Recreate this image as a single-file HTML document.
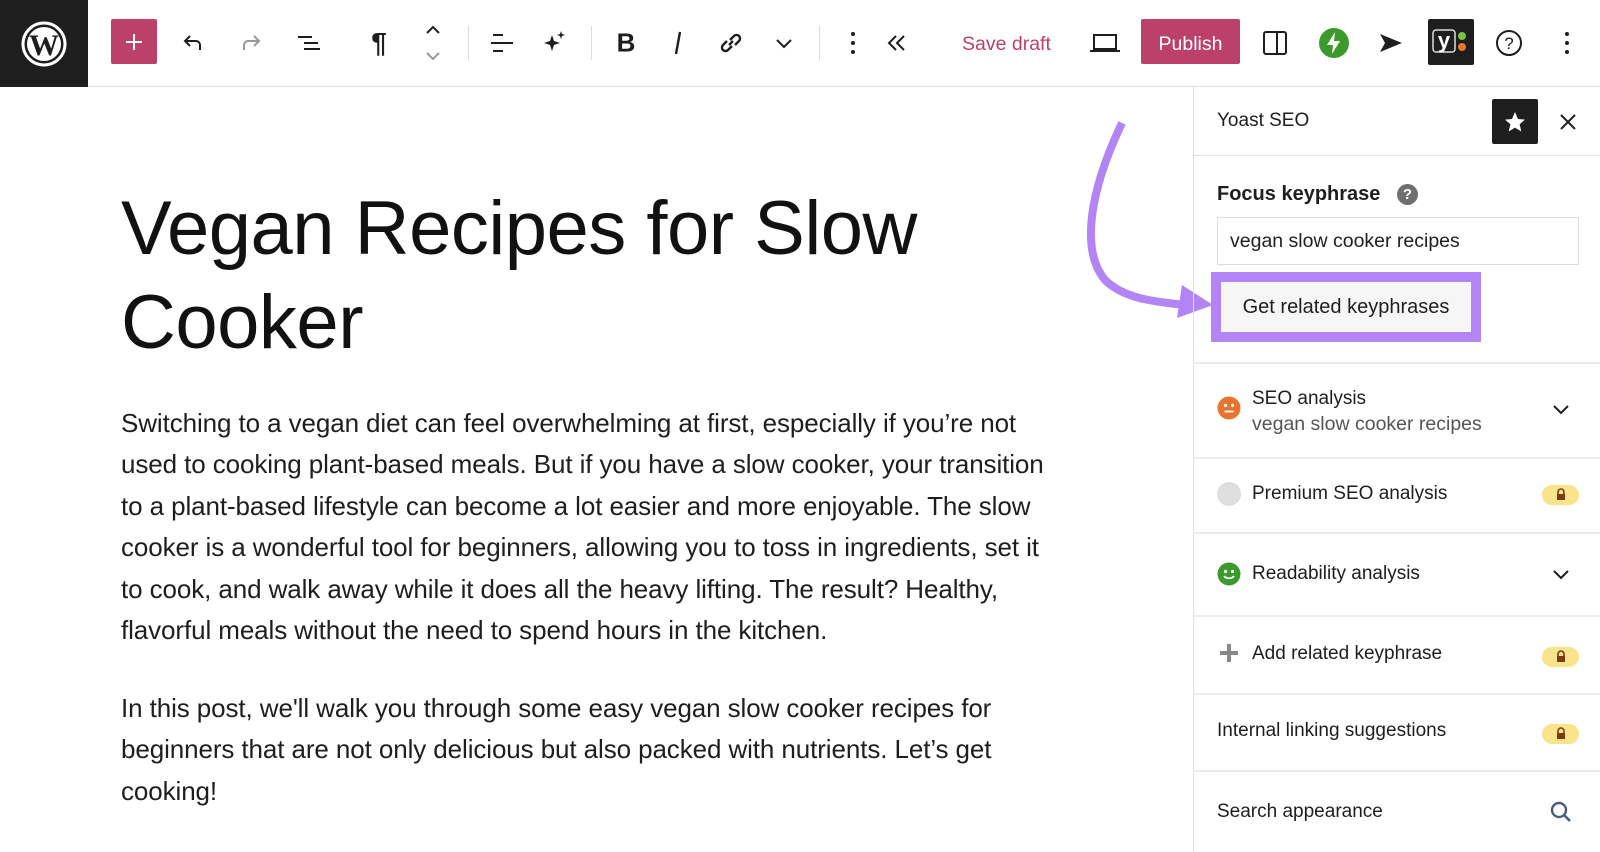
<!DOCTYPE html>
<html><head><meta charset="utf-8"><style>
*{margin:0;padding:0;box-sizing:border-box}
body{width:1600px;height:852px;overflow:hidden;background:#fff;font-family:"Liberation Sans",sans-serif;color:#1e1e1e;position:relative}
.a{position:absolute}
.tb{position:absolute;left:0;top:0;width:1600px;height:87px;border-bottom:1px solid #e0e0e0;background:#fff}
.ic{position:absolute;top:43px;transform:translate(-50%,-50%)}
.sep{position:absolute;top:26px;width:1px;height:34px;background:#ddd}
.title{left:121px;top:182px;font-size:76px;line-height:94px;color:#111;white-space:nowrap;letter-spacing:-0.5px}
.p{left:121px;font-size:26px;line-height:41.4px;color:#1e1e1e;white-space:nowrap;letter-spacing:-0.1px}
.side{left:1193px;top:87px;width:407px;height:765px;border-left:1px solid #e0e0e0}
.hr{position:absolute;left:1193px;width:407px;height:2px;background:#ececec}
.st{font-size:19px;color:#1e1e1e;white-space:nowrap}
.lock{position:absolute;left:1542px;width:37px;height:20px;border-radius:10px;background:#f9e48b}
.lk{position:absolute;left:1555px}
</style></head><body>
<div class="tb">
 <div class="a" style="left:0;top:0;width:88px;height:87px;background:#1e1e1e"></div>
 <svg class="a" style="left:21px;top:21px" width="46" height="46" viewBox="0 0 46 46"><circle cx="23" cy="23" r="21" fill="none" stroke="#fff" stroke-width="3"/><circle cx="23" cy="23" r="17" fill="#fff"/><text x="23" y="34" text-anchor="middle" font-family="Liberation Serif" font-weight="bold" font-size="30" fill="#1e1e1e">W</text></svg>
 <div class="a" style="left:111px;top:19px;width:46px;height:45px;background:#bb406a;border-radius:2px"></div>
 <svg class="a" style="left:122px;top:30px" width="24" height="24"><path d="M12 4v16M4 12h16" stroke="#fff" stroke-width="2"/></svg>
 <svg class="ic" style="left:193px" width="26" height="24"><path d="M20 19v-5a4 4 0 0 0-4-4H5M10 5L5 10l5 5" fill="none" stroke="#1e1e1e" stroke-width="2"/></svg>
 <svg class="ic" style="left:251px" width="26" height="24"><path d="M6 19v-5a4 4 0 0 1 4-4h11M16 5l5 5-5 5" fill="none" stroke="#999" stroke-width="2"/></svg>
 <svg class="ic" style="left:310px" width="28" height="24"><path d="M2 6h14M8 12h14M8 18h16" stroke="#1e1e1e" stroke-width="2"/></svg>
 <div class="ic" style="left:379px;font-size:28px;font-weight:bold">¶</div>
 <svg class="ic" style="left:433px" width="20" height="40"><path d="M4 10l6-6 6 6" fill="none" stroke="#1e1e1e" stroke-width="2"/><path d="M4 30l6 6 6-6" fill="none" stroke="#999" stroke-width="2"/></svg>
 <div class="sep" style="left:468px"></div>
 <svg class="ic" style="left:502px" width="26" height="26"><path d="M4 5h10M2 13h22M4 21h10" stroke="#1e1e1e" stroke-width="2"/></svg>
 <svg class="ic" style="left:555px" width="26" height="28"><path d="M10 6l2 6 6 2-6 2-2 6-2-6-6-2 6-2zM19 2l1 3 3 1-3 1-1 3-1-3-3-1 3-1z" fill="#1e1e1e"/></svg>
 <div class="sep" style="left:591px"></div>
 <div class="ic" style="left:626px;font-size:26px;font-weight:bold">B</div>
 <svg class="ic" style="left:678px" width="16" height="26"><path d="M10 2L6 24" stroke="#1e1e1e" stroke-width="2.4"/></svg>
 <svg class="ic" style="left:731px" width="28" height="28"><path d="M12 16l4-4M10 12l-4 4a3.5 3.5 0 0 0 5 5l4-4M18 16l4-4a3.5 3.5 0 0 0-5-5l-4 4" fill="none" stroke="#1e1e1e" stroke-width="2.4"/></svg>
 <svg class="ic" style="left:784px" width="20" height="14"><path d="M3 4l7 7 7-7" fill="none" stroke="#1e1e1e" stroke-width="2"/></svg>
 <div class="sep" style="left:819px"></div>
 <svg class="ic" style="left:853px" width="6" height="24"><circle cx="3" cy="3" r="2" fill="#1e1e1e"/><circle cx="3" cy="12" r="2" fill="#1e1e1e"/><circle cx="3" cy="21" r="2" fill="#1e1e1e"/></svg>
 <svg class="ic" style="left:897px" width="24" height="20"><path d="M11 3L4 10l7 7M19 3l-7 7 7 7" fill="none" stroke="#1e1e1e" stroke-width="2"/></svg>
 <div class="a" style="left:962px;top:33px;font-size:19.5px;color:#bb406a">Save draft</div>
 <svg class="ic" style="left:1105px" width="30" height="22"><rect x="4" y="3" width="22" height="14" fill="none" stroke="#1e1e1e" stroke-width="2"/><path d="M0 19h30" stroke="#1e1e1e" stroke-width="2"/></svg>
 <div class="a" style="left:1141px;top:19px;width:99px;height:45px;background:#bb406a;border-radius:2px;color:#fff;font-size:19.5px;text-align:center;line-height:50px">Publish</div>
 <svg class="ic" style="left:1275px" width="26" height="26"><rect x="2" y="2" width="22" height="22" rx="2" fill="none" stroke="#1e1e1e" stroke-width="2"/><path d="M15 2v22" stroke="#1e1e1e" stroke-width="2"/></svg>
 <svg class="ic" style="left:1334px" width="30" height="30"><circle cx="15" cy="15" r="15" fill="#3b9a2b"/><path d="M16 4l-8 13h6l-1 9 8-13h-6z" fill="#fff"/></svg>
 <svg class="ic" style="left:1391px" width="26" height="22"><path d="M2 2l22 9-22 9 5-9z" fill="#1e1e1e"/></svg>
 <div class="a" style="left:1428px;top:19px;width:46px;height:46px;background:#1e1e1e;border-radius:2px"></div>
 <svg class="a" style="left:1432px;top:28px" width="40" height="28"><rect x="1" y="2" width="22" height="22" rx="3" fill="none" stroke="#ddd" stroke-width="1.5"/><text x="12" y="20" text-anchor="middle" font-size="22" font-weight="bold" fill="#fff">y</text><circle cx="30" cy="8" r="4" fill="#7ac143"/><circle cx="30" cy="19" r="4" fill="#e8742d"/></svg>
 <svg class="ic" style="left:1509px" width="28" height="28"><circle cx="14" cy="14" r="12" fill="none" stroke="#1e1e1e" stroke-width="2"/><text x="14" y="20" text-anchor="middle" font-size="17" fill="#1e1e1e">?</text></svg>
 <svg class="ic" style="left:1567px" width="6" height="24"><circle cx="3" cy="3" r="2" fill="#1e1e1e"/><circle cx="3" cy="12" r="2" fill="#1e1e1e"/><circle cx="3" cy="21" r="2" fill="#1e1e1e"/></svg>
</div>

<div class="a title">Vegan Recipes for Slow<br>Cooker</div>
<div class="a p" style="top:403px">Switching to a vegan diet can feel overwhelming at first, especially if you’re not<br>used to cooking plant-based meals. But if you have a slow cooker, your transition<br>to a plant-based lifestyle can become a lot easier and more enjoyable. The slow<br>cooker is a wonderful tool for beginners, allowing you to toss in ingredients, set it<br>to cook, and walk away while it does all the heavy lifting. The result? Healthy,<br>flavorful meals without the need to spend hours in the kitchen.</div>
<div class="a p" style="top:688px">In this post, we'll walk you through some easy vegan slow cooker recipes for<br>beginners that are not only delicious but also packed with nutrients. Let’s get<br>cooking!</div>

<svg class="a" style="left:0;top:0" width="1600" height="852"><path d="M1122 123C1090 190 1080 250 1105 280C1125 300 1160 302 1185 305" fill="none" stroke="#b384f5" stroke-width="8"/><path d="M1182 285L1213 305L1177 318Z" fill="#b384f5"/></svg>

<div class="a side"></div>
<div class="a st" style="left:1217px;top:110px">Yoast SEO</div>
<div class="a" style="left:1492px;top:99px;width:46px;height:45px;background:#1e1e1e;border-radius:2px"></div>
<svg class="a" style="left:1503px;top:110px" width="24" height="24"><path d="M12 2l3 7 7 .6-5.4 4.6 1.7 7.3L12 17.6 5.7 21.5l1.7-7.3L2 9.6 9 9z" fill="#fff"/></svg>
<svg class="a" style="left:1558px;top:112px" width="20" height="20"><path d="M3 3l14 14M17 3L3 17" stroke="#1e1e1e" stroke-width="2"/></svg>
<div class="hr" style="top:155px;height:1px;background:#e0e0e0"></div>
<div class="a" style="left:1217px;top:183px;font-size:20px;font-weight:bold;color:#1e1e1e">Focus keyphrase</div>
<div class="a" style="left:1397px;top:184px;width:21px;height:21px;border-radius:50%;background:#707070;color:#fff;font-size:15px;font-weight:bold;text-align:center;line-height:21px">?</div>
<div class="a" style="left:1217px;top:217px;width:362px;height:48px;border:1px solid #ddd"></div>
<div class="a" style="left:1230px;top:230px;font-size:19.5px;color:#1e1e1e">vegan slow cooker recipes</div>
<div class="a" style="left:1211px;top:272px;width:270px;height:70px;background:#b384f5"></div>
<div class="a" style="left:1221px;top:282px;width:250px;height:50px;background:#f6f6f6;font-size:20px;color:#1e1e1e;text-align:center;line-height:50px">Get related keyphrases</div>
<div class="hr" style="top:362px"></div>

<svg class="a" style="left:1217px;top:396px" width="24" height="24"><circle cx="12" cy="12" r="11.5" fill="#e8742d"/><circle cx="8.5" cy="9.5" r="1.6" fill="#fff"/><circle cx="15.5" cy="9.5" r="1.6" fill="#fff"/><path d="M7.5 15.5h9" stroke="#fff" stroke-width="1.8"/></svg>
<div class="a st" style="left:1252px;top:388px">SEO analysis</div>
<div class="a st" style="left:1252px;top:413px;color:#555;font-size:19.5px">vegan slow cooker recipes</div>
<svg class="a" style="left:1551px;top:403px" width="20" height="14"><path d="M3 3l7 7 7-7" fill="none" stroke="#1e1e1e" stroke-width="2"/></svg>
<div class="hr" style="top:457px"></div>

<div class="a" style="left:1217px;top:482px;width:24px;height:24px;border-radius:50%;background:#dedede"></div>
<div class="a st" style="left:1252px;top:483px">Premium SEO analysis</div>
<div class="lock" style="top:485px"></div>
<div class="hr" style="top:532px"></div>

<svg class="a" style="left:1217px;top:562px" width="24" height="24"><circle cx="12" cy="12" r="11.5" fill="#3b9a2b"/><circle cx="8.5" cy="9.5" r="1.6" fill="#fff"/><circle cx="15.5" cy="9.5" r="1.6" fill="#fff"/><path d="M7 14c2 3 8 3 10 0" fill="none" stroke="#fff" stroke-width="1.8"/></svg>
<div class="a st" style="left:1252px;top:563px">Readability analysis</div>
<svg class="a" style="left:1551px;top:568px" width="20" height="14"><path d="M3 3l7 7 7-7" fill="none" stroke="#1e1e1e" stroke-width="2"/></svg>
<div class="hr" style="top:615px"></div>

<svg class="a" style="left:1219px;top:643px" width="20" height="20"><path d="M10 1v18M1 10h18" stroke="#888" stroke-width="4"/></svg>
<div class="a st" style="left:1252px;top:643px">Add related keyphrase</div>
<div class="lock" style="top:647px"></div>
<div class="hr" style="top:693px"></div>

<div class="a st" style="left:1217px;top:720px">Internal linking suggestions</div>
<div class="lock" style="top:724px"></div>
<div class="hr" style="top:770px"></div>

<div class="a st" style="left:1217px;top:801px">Search appearance</div>
<svg class="a" style="left:1549px;top:800px" width="24" height="24"><circle cx="10" cy="10" r="7" fill="none" stroke="#4a5a80" stroke-width="2.4"/><path d="M15 15l6 6" stroke="#4a5a80" stroke-width="2.6"/></svg>

<svg class="lk" style="top:488px" width="12" height="14"><path d="M3 6V4a3 3 0 0 1 6 0v2" fill="none" stroke="#7a3b12" stroke-width="1.6"/><rect x="2" y="6" width="8" height="6" fill="#7a3b12"/></svg>
<svg class="lk" style="top:650px" width="12" height="14"><path d="M3 6V4a3 3 0 0 1 6 0v2" fill="none" stroke="#7a3b12" stroke-width="1.6"/><rect x="2" y="6" width="8" height="6" fill="#7a3b12"/></svg>
<svg class="lk" style="top:727px" width="12" height="14"><path d="M3 6V4a3 3 0 0 1 6 0v2" fill="none" stroke="#7a3b12" stroke-width="1.6"/><rect x="2" y="6" width="8" height="6" fill="#7a3b12"/></svg>
</body></html>
